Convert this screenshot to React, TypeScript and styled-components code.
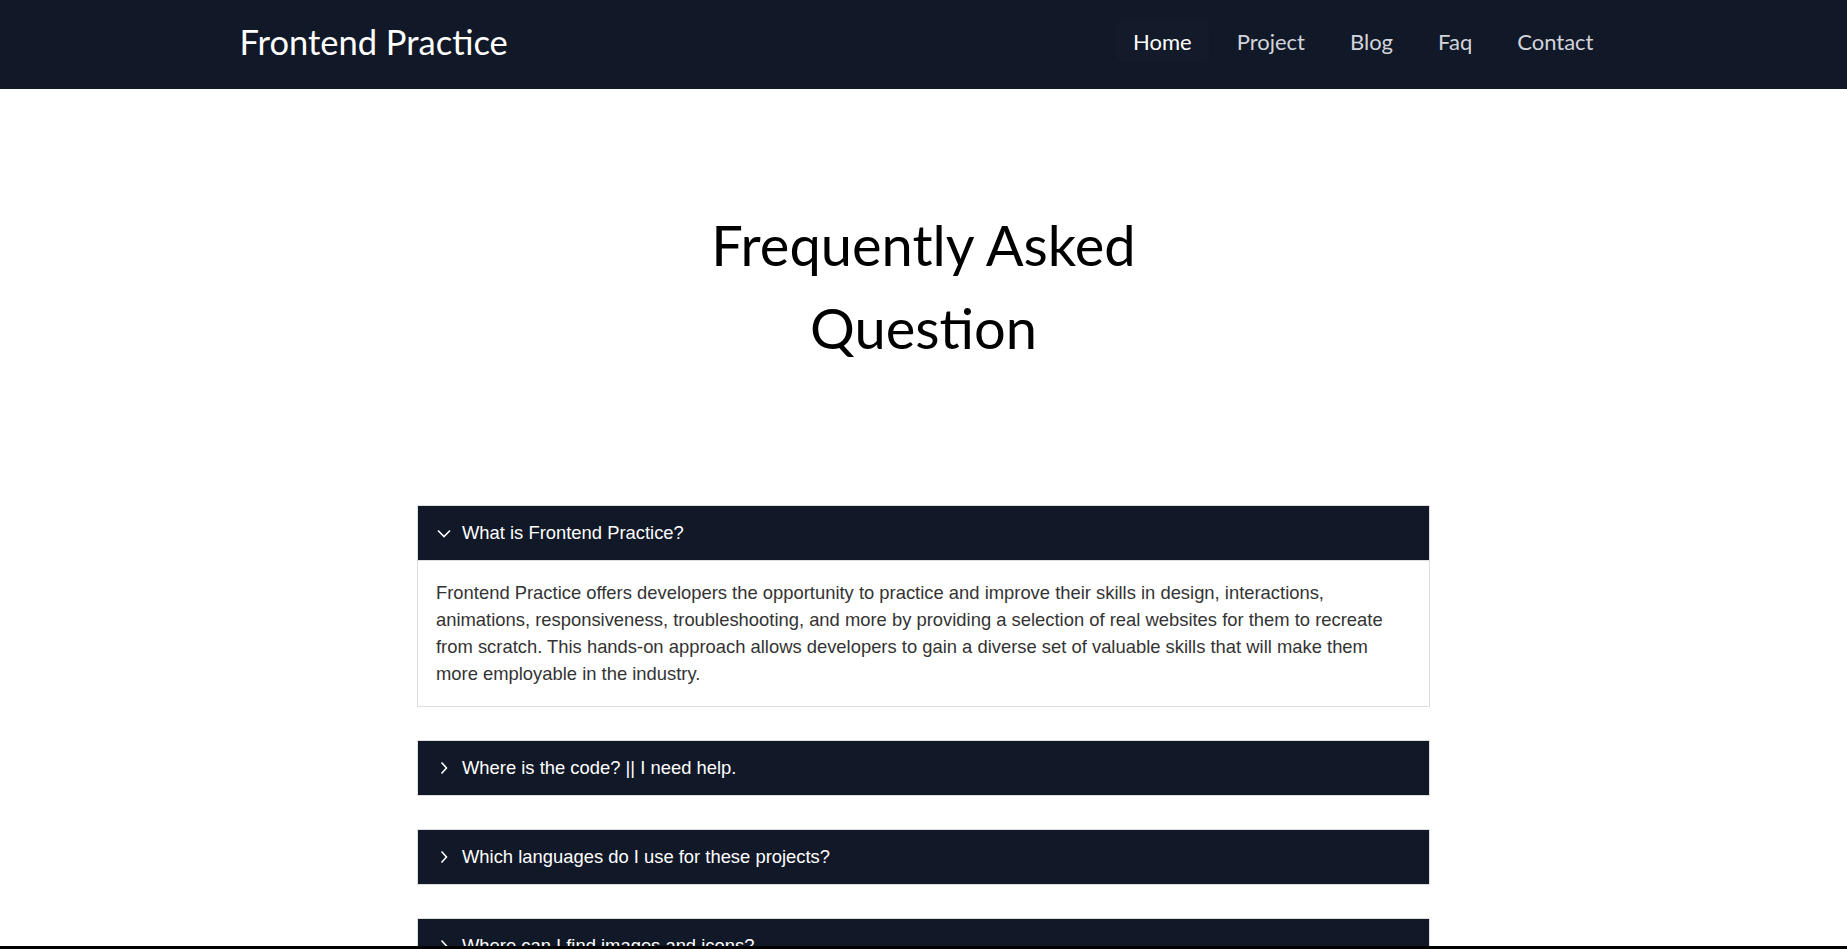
import { useState } from 'react'
import styled, { createGlobalStyle } from 'styled-components'

const GlobalStyle = createGlobalStyle`
    * { box-sizing: border-box; }
    body {
        margin: 0;
        background: #fff;
        font-family: "Liberation Sans", Arial, sans-serif;
    }
`

const NavBar = styled.nav`
    height: 89px;
    background: #111827;
`

const NavInner = styled.div`
    width: 1374px;
    height: 100%;
    margin: 0 auto;
    display: flex;
    align-items: center;
    justify-content: space-between;
`

const Logo = styled.a`
    font-family: Lato, "Noto Sans", sans-serif;
    font-size: 34.5px;
    color: #fff;
    text-decoration: none;
    margin: -6px 0 0 3px;
`

const NavLinks = styled.ul`
    display: flex;
    gap: 11px;
    list-style: none;
    margin: 0;
    padding: 0;
    margin-top: -7px;
`

const NavLink = styled.a<{ $active?: boolean }>`
    display: block;
    padding: 8px 17px;
    border-radius: 6px;
    font-family: Lato, "Noto Sans", sans-serif;
    font-size: 22px;
    line-height: 25px;
    text-decoration: none;
    color: ${p => (p.$active ? '#ffffff' : '#d1d5db')};
    background: ${p => (p.$active ? '#131a29' : 'transparent')};
`

const Main = styled.main`
    padding: 114px 0 80px;
`

const Title = styled.h1`
    max-width: 560px;
    margin: 0 auto 136px;
    text-align: center;
    font-family: Lato, "Noto Sans", sans-serif;
    font-weight: 400;
    font-size: 56px;
    line-height: 83px;
    color: #000;
`

const List = styled.div`
    width: 1013px;
    margin: 0 auto;
    display: flex;
    flex-direction: column;
    gap: 33px;
`

const Item = styled.div`
    border: 1px solid #dedede;
`

const Question = styled.button`
    width: 100%;
    height: 54px;
    display: flex;
    align-items: center;
    gap: 11px;
    padding: 0 19px;
    border: 0;
    background: #111827;
    color: #fff;
    font-family: "Liberation Sans", Arial, sans-serif;
    font-size: 18.4px;
    text-align: left;
    cursor: pointer;
`

const Icon = styled.span`
    width: 14px;
    height: 14px;
    display: flex;
    align-items: center;
    justify-content: center;
`

const Answer = styled.div`
    border-top: 1px solid #dedede;
    padding: 18px 18px 19px;
    font-size: 18.4px;
    line-height: 27px;
    color: #333;
`

const BottomEdge = styled.div`
    position: fixed;
    left: 0;
    right: 0;
    bottom: 0;
    height: 3px;
    background: #000;
`

const faqs = [
    {
        q: 'What is Frontend Practice?',
        a: 'Frontend Practice offers developers the opportunity to practice and improve their skills in design, interactions, animations, responsiveness, troubleshooting, and more by providing a selection of real websites for them to recreate from scratch. This hands-on approach allows developers to gain a diverse set of valuable skills that will make them more employable in the industry.',
    },
    { q: 'Where is the code? || I need help.', a: 'The code is up to you. Try to build the website yourself first, then ask the community for help.' },
    { q: 'Which languages do I use for these projects?', a: 'Use any language or framework you like: HTML, CSS, JavaScript, React, Vue and more.' },
    { q: 'Where can I find images and icons?', a: 'Use free resources such as Unsplash for images and icon libraries for icons.' },
    { q: 'Can I use these projects in my portfolio?', a: 'Yes, feel free to show the projects you build in your portfolio.' },
]

function Chevron({ open }: { open: boolean }) {
    return open ? (
        <svg width="14" height="9" viewBox="0 0 14 9" fill="none">
            <polyline points="1,1.5 7,7.5 13,1.5" stroke="#fff" strokeWidth="1.6" />
        </svg>
    ) : (
        <svg width="8" height="14" viewBox="0 0 8 14" fill="none">
            <polyline points="1.5,1.5 6.5,7 1.5,12.5" stroke="#fff" strokeWidth="1.6" />
        </svg>
    )
}

export default function App() {
    const [open, setOpen] = useState(0)

    return (
        <>
            <GlobalStyle />
            <NavBar>
                <NavInner>
                    <Logo href="#">Frontend Practice</Logo>
                    <NavLinks>
                        <li><NavLink href="#" $active>Home</NavLink></li>
                        <li><NavLink href="#">Project</NavLink></li>
                        <li><NavLink href="#">Blog</NavLink></li>
                        <li><NavLink href="#">Faq</NavLink></li>
                        <li><NavLink href="#">Contact</NavLink></li>
                    </NavLinks>
                </NavInner>
            </NavBar>

            <Main>
                <Title>Frequently Asked Question</Title>

                <List>
                    {faqs.map((f, i) => (
                        <Item key={f.q}>
                            <Question onClick={() => setOpen(open === i ? -1 : i)}>
                                <Icon><Chevron open={open === i} /></Icon>
                                {f.q}
                            </Question>
                            {open === i && <Answer>{f.a}</Answer>}
                        </Item>
                    ))}
                </List>
            </Main>
            <BottomEdge />
        </>
    )
}
